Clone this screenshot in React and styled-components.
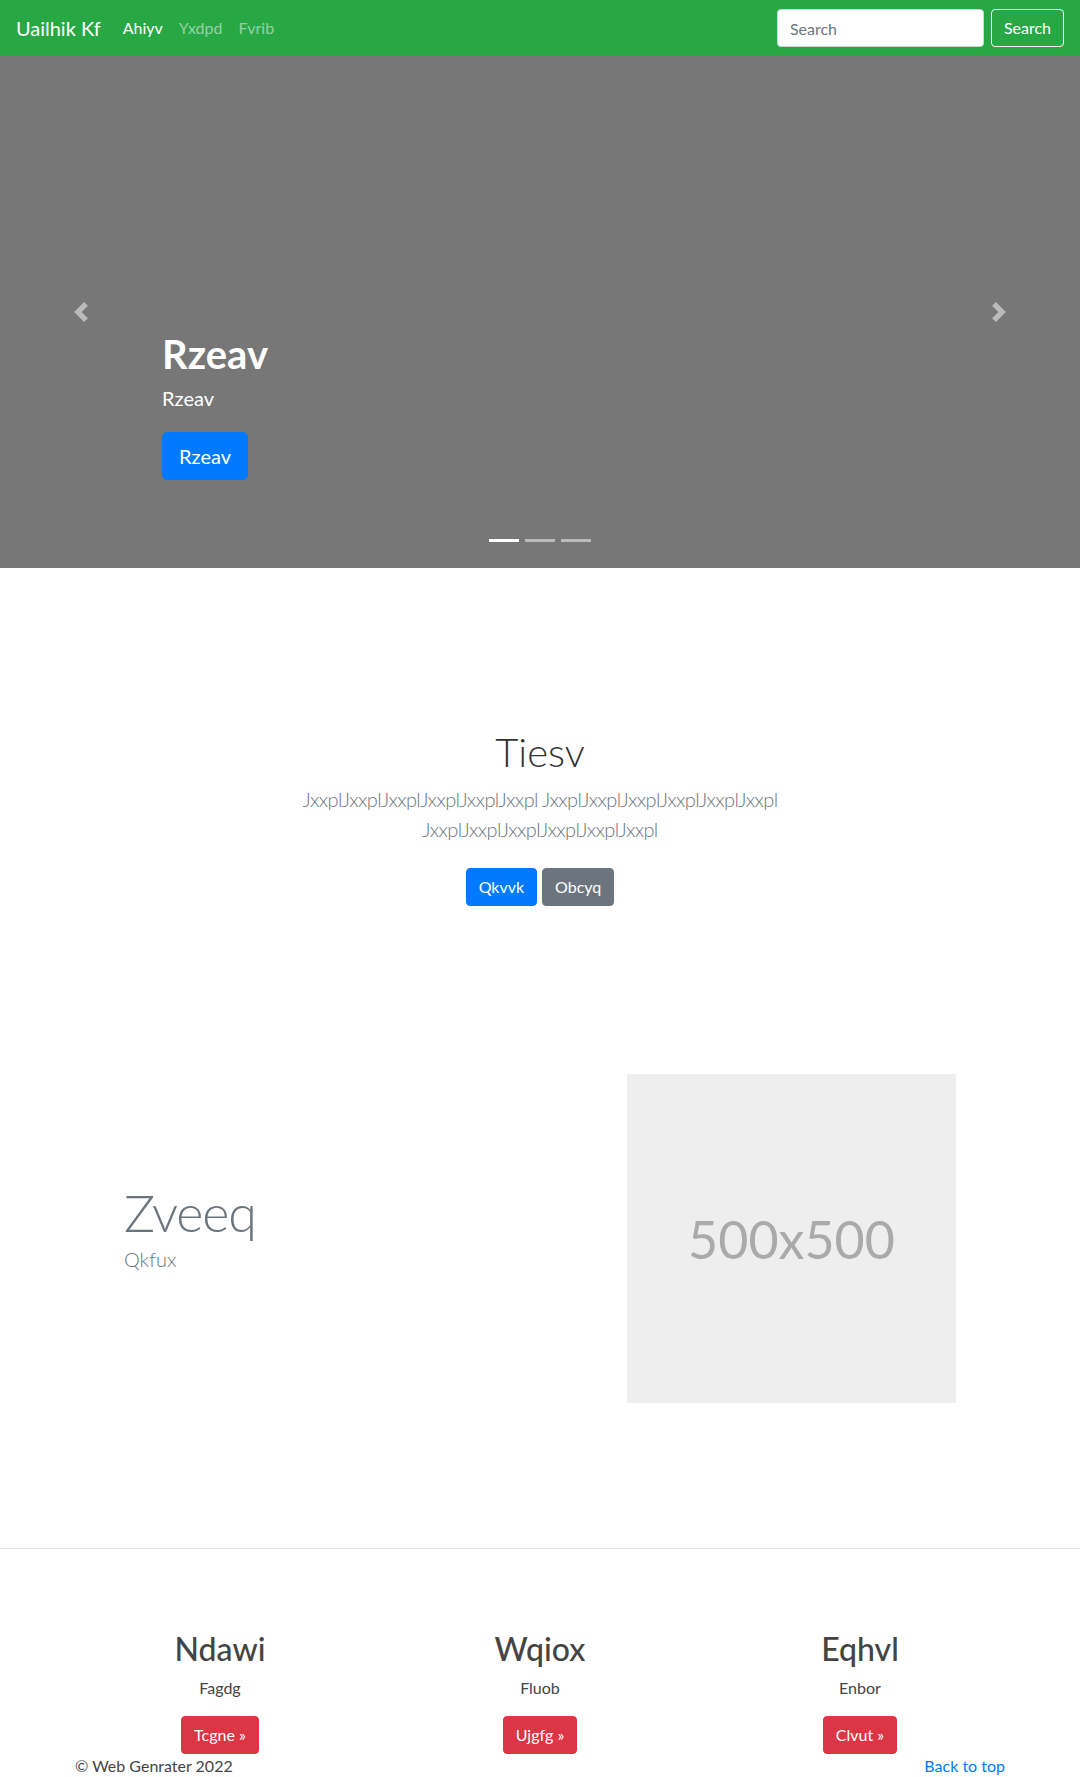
import React from "react";
import styled, { createGlobalStyle } from "styled-components";

const GlobalStyle = createGlobalStyle`
  *, *::before, *::after { box-sizing: border-box; }
  body {
    margin: 0;
    font-family: Lato, "Open Sans", "Liberation Sans", sans-serif;
    font-size: 16px;
    line-height: 1.5;
    color: #212529;
    background: #fff;
  }
`;

const Navbar = styled.nav`
  display: flex;
  align-items: center;
  height: 56px;
  padding: 0 16px;
  background: #28a745;
`;

const Brand = styled.a`
  font-size: 20px;
  line-height: 30px;
  color: #fff;
  margin-right: 14px;
  text-decoration: none;
`;

const NavList = styled.div`
  display: flex;
`;

const NavLink = styled.a`
  padding: 0 8px;
  color: ${({ $active }) => ($active ? "#fff" : "rgba(255,255,255,.5)")};
  text-decoration: none;
`;

const SearchForm = styled.form`
  margin-left: auto;
  display: flex;
  gap: 7px;
`;

const SearchInput = styled.input`
  width: 207px;
  height: 38px;
  padding: 6px 12px;
  font-family: inherit;
  font-size: 16px;
  color: #495057;
  border: 1px solid #ced4da;
  border-radius: 4px;
  &::placeholder { color: #6c757d; }
`;

const Button = styled.button`
  display: inline-block;
  font-family: inherit;
  font-size: ${({ $lg }) => ($lg ? "20px" : "16px")};
  line-height: 1.5;
  padding: ${({ $lg }) => ($lg ? "8px 16px" : "6px 12px")};
  border-radius: ${({ $lg }) => ($lg ? "5px" : "4px")};
  border: 1px solid ${({ $color }) => $color};
  background: ${({ $outline, $color }) => ($outline ? "transparent" : $color)};
  color: #fff;
  cursor: pointer;
`;

const Carousel = styled.section`
  position: relative;
  height: 512px;
  background: #777;
  display: flex;
  flex-direction: column;
  justify-content: flex-end;
  padding: 0 15% 88px;
  color: #fff;
`;

const CaptionTitle = styled.h1`
  margin: 0 0 5px;
  font-size: 40px;
  font-weight: 700;
  line-height: 1.2;
`;

const CaptionText = styled.p`
  margin: 0 0 19px;
  font-size: 20px;
  line-height: 1.5;
`;

const CaptionAction = styled.div``;

const Control = styled.a`
  position: absolute;
  top: 0;
  bottom: 0;
  ${({ $side }) => $side}: 0;
  width: 15%;
  display: flex;
  align-items: center;
  justify-content: center;
  opacity: 0.5;
`;

const Indicators = styled.ol`
  position: absolute;
  left: 0;
  right: 0;
  bottom: 26px;
  margin: 0;
  padding: 0;
  list-style: none;
  display: flex;
  justify-content: center;
  gap: 6px;
`;

const Indicator = styled.li`
  width: 30px;
  height: 3px;
  background: #fff;
  opacity: ${({ $active }) => ($active ? 1 : 0.5)};
`;

const Intro = styled.section`
  padding-top: 160px;
  text-align: center;
`;

const IntroTitle = styled.h1`
  margin: 0 0 8px;
  font-size: 40px;
  font-weight: 300;
  line-height: 1.2;
  color: #333;
`;

const Lead = styled.p`
  max-width: 610px;
  margin: 0 auto;
  font-size: 20px;
  font-weight: 300;
  letter-spacing: -0.6px;
  color: #6c757d;
`;

const ButtonRow = styled.div`
  display: flex;
  justify-content: center;
  gap: 5px;
  margin-top: 24px;
`;

const Container = styled.div`
  width: 960px;
  margin: 0 auto;
`;

const Feature = styled(Container)`
  margin-top: 168px;
  display: grid;
  grid-template-columns: 1fr auto;
  align-items: center;
`;

const FeatureText = styled.div`
  padding-left: 64px;
`;

const FeatureTitle = styled.h2`
  margin: 0;
  font-size: 52px;
  font-weight: 300;
  letter-spacing: -1.2px;
  line-height: 1.2;
  color: #6c757d;
`;

const FeatureSub = styled.p`
  margin: 0 0 22px;
  font-size: 20px;
  font-weight: 300;
  color: #6c757d;
`;

const Placeholder = styled.div`
  width: 329px;
  height: 329px;
  margin-right: 64px;
  background: #eee;
  color: #aaa;
  font-size: 52px;
  display: flex;
  align-items: center;
  justify-content: center;
`;

const Divider = styled.hr`
  margin: 145px 0 0;
  border: 0;
  border-top: 1px solid rgba(0, 0, 0, 0.1);
`;

const Marketing = styled(Container)`
  padding-top: 81px;
  display: grid;
  grid-template-columns: repeat(3, 1fr);
  text-align: center;
`;

const MarketingTitle = styled.h2`
  margin: 0 0 8px;
  font-size: 32px;
  font-weight: 500;
  line-height: 1.2;
  color: #444;
`;

const MarketingText = styled.p`
  margin: 0 0 16px;
  color: #444;
`;

const Footer = styled(Container)`
  display: flex;
  justify-content: space-between;
  padding: 0 15px 32px;
  color: #444;
`;

const FooterLink = styled.a`
  color: #007bff;
  text-decoration: none;
`;

const Chevron = ({ dir }) => (
  <svg width="20" height="20" viewBox="0 0 8 8" fill="#fff">
    {dir === "prev" ? (
      <path d="M5.25 0l-4 4 4 4 1.5-1.5L4.25 4l2.5-2.5L5.25 0z" />
    ) : (
      <path d="M2.75 0l-1.5 1.5L3.75 4l-2.5 2.5L2.75 8l4-4-4-4z" />
    )}
  </svg>
);

const columns = [
  { title: "Ndawi", text: "Fagdg", action: "Tcgne" },
  { title: "Wqiox", text: "Fluob", action: "Ujgfg" },
  { title: "Eqhvl", text: "Enbor", action: "Clvut" },
];

const App = () => {
  const group = "JxxplJxxplJxxplJxxplJxxplJxxpl";
  return (
    <>
      <GlobalStyle />
      <Navbar>
        <Brand href="#">Uailhik Kf</Brand>
        <NavList>
          <NavLink $active href="#">Ahiyv</NavLink>
          <NavLink href="#">Yxdpd</NavLink>
          <NavLink href="#">Fvrib</NavLink>
        </NavList>
        <SearchForm onSubmit={(e) => e.preventDefault()}>
          <SearchInput placeholder="Search" />
          <Button $outline $color="#f8f9fa">Search</Button>
        </SearchForm>
      </Navbar>

      <Carousel>
        <Control $side="left" href="#"><Chevron dir="prev" /></Control>
        <Control $side="right" href="#"><Chevron dir="next" /></Control>
        <CaptionTitle>Rzeav</CaptionTitle>
        <CaptionText>Rzeav</CaptionText>
        <CaptionAction>
          <Button $lg $color="#007bff">Rzeav</Button>
        </CaptionAction>
        <Indicators>
          <Indicator $active />
          <Indicator />
          <Indicator />
        </Indicators>
      </Carousel>

      <Intro>
        <IntroTitle>Tiesv</IntroTitle>
        <Lead>{`${group} ${group} ${group}`}</Lead>
        <ButtonRow>
          <Button $color="#007bff">Qkvvk</Button>
          <Button $color="#6c757d">Obcyq</Button>
        </ButtonRow>
      </Intro>

      <Feature>
        <FeatureText>
          <FeatureTitle>Zveeq</FeatureTitle>
          <FeatureSub>Qkfux</FeatureSub>
        </FeatureText>
        <Placeholder>500x500</Placeholder>
      </Feature>

      <Divider />

      <Marketing>
        {columns.map((c) => (
          <div key={c.title}>
            <MarketingTitle>{c.title}</MarketingTitle>
            <MarketingText>{c.text}</MarketingText>
            <Button $color="#dc3545">{c.action} »</Button>
          </div>
        ))}
      </Marketing>

      <Footer>
        <span>© Web Genrater 2022</span>
        <FooterLink href="#">Back to top</FooterLink>
      </Footer>
    </>
  );
};

export default App;
